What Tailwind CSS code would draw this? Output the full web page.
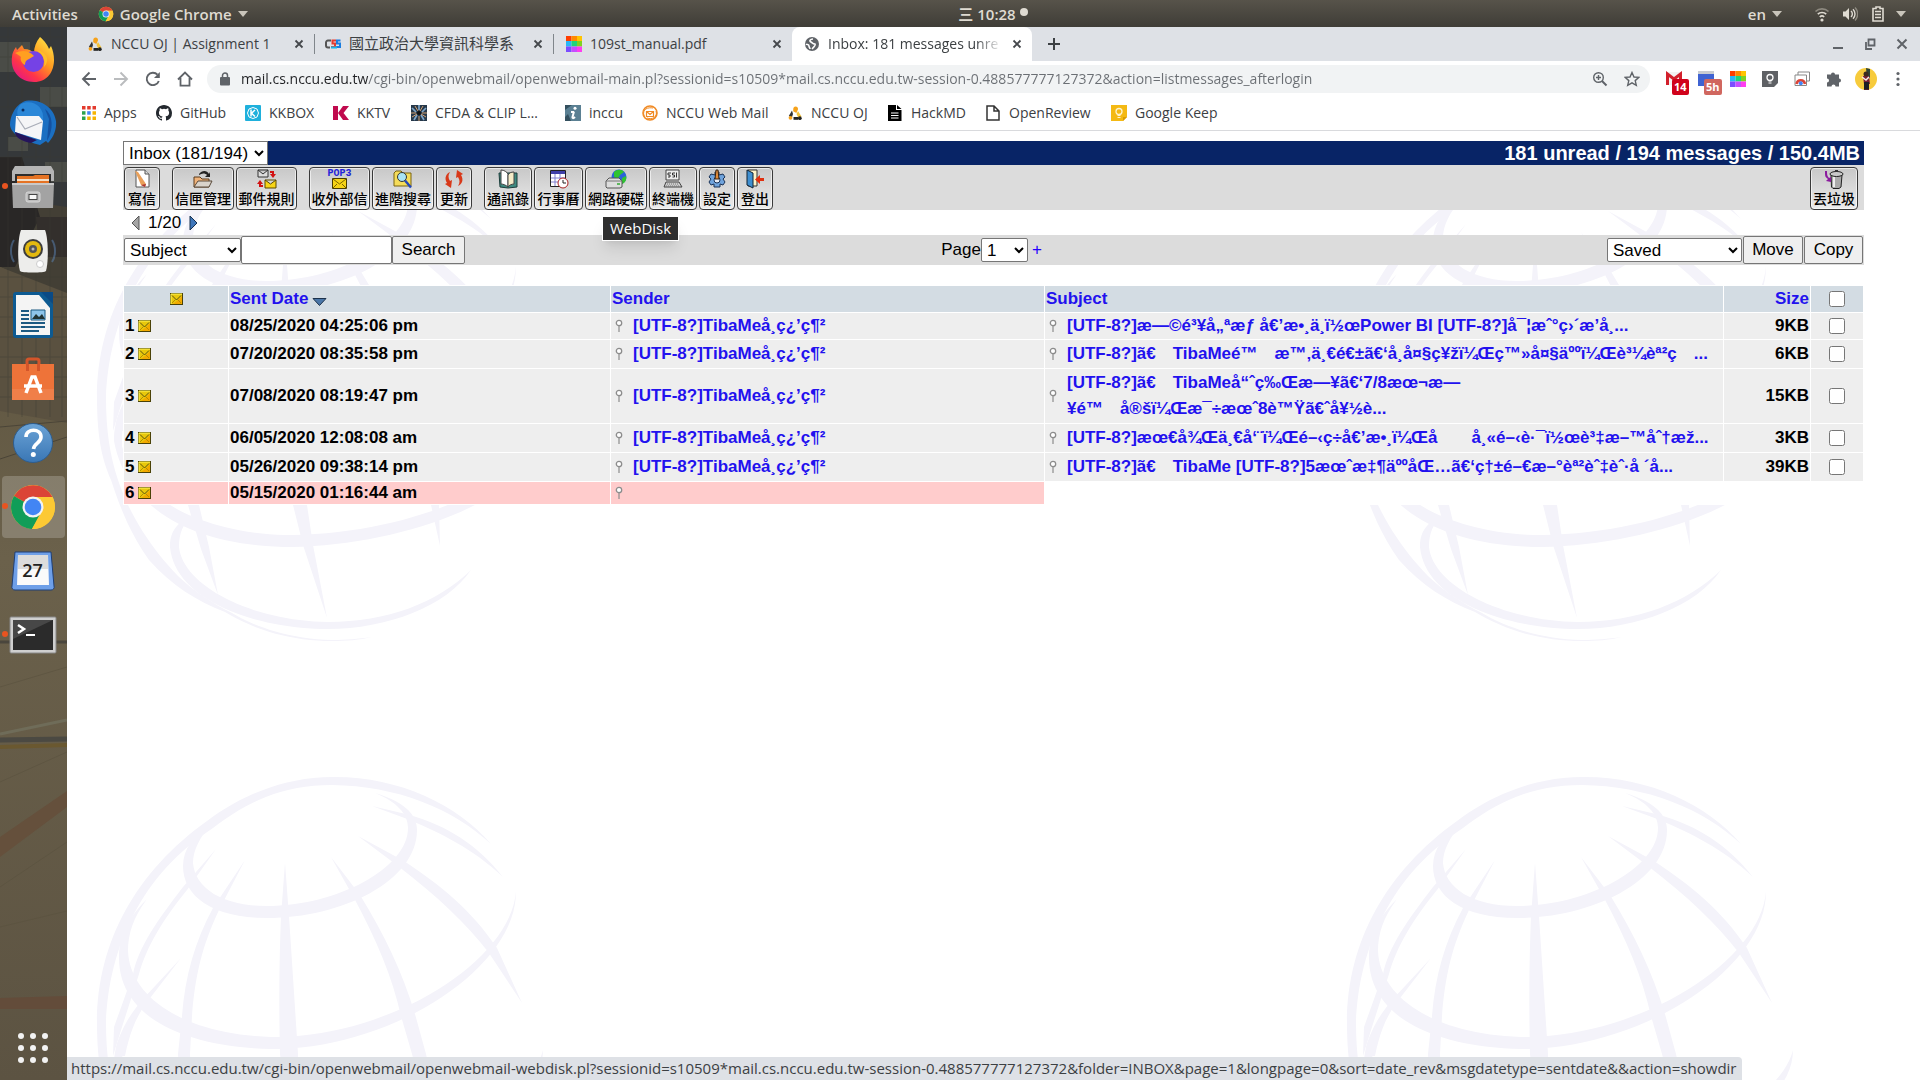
<!DOCTYPE html>
<html lang="en">
<head>
<meta charset="utf-8">
<title>Inbox: 181 messages unread</title>
<script src="https://cdn.jsdelivr.net/npm/@tailwindcss/browser@4"></script>
</head>
<body class="flex h-screen flex-col overflow-hidden bg-[#5f5745] font-['Open_Sans','Noto_Sans_CJK_TC',sans-serif] text-sm text-[#3c4043]">

<!-- shared symbols -->
<svg class="hidden" aria-hidden="true">
  <symbol id="mail" viewBox="0 0 13 12">
    <rect x=".5" y=".5" width="12" height="11" fill="#e8c80c" stroke="#4a4208"/>
    <path d="M1 11V1h11" fill="none" stroke="#fff45a"/>
    <path d="M7 8l5-5v8H3z" fill="#f2a900"/>
    <path d="M2 2.500l4.500 4.500L11 2.500" fill="none" stroke="#5c5210"/>
    <path d="M2 10l3-3M11 10L8 7" stroke="#b98a00" fill="none"/>
  </symbol>
  <symbol id="pin" viewBox="0 0 8 14">
    <circle cx="4" cy="4" r="2.700" fill="#fff" stroke="#8c8c8c" stroke-width="1.300"/>
    <path d="M4 7v6" stroke="#8c8c8c" stroke-width="1.200"/>
  </symbol>
  <symbol id="close" viewBox="0 0 10 10"><path d="M1.500 1.500l7 7M8.500 1.500l-7 7" stroke="#45484c" stroke-width="1.800" fill="none"/></symbol>
  <symbol id="judge" viewBox="0 0 16 16">
    <path d="M8.500 1.500a2.500 2.500 0 0 1 2.400 3.300L9.300 8 6.200 6.300 6.300 3.500A2.300 2.300 0 0 1 8.500 1.500z" fill="#f6a21b"/>
    <path d="M5 5.500L1.800 11l3 1.800L6 9z" fill="#333"/>
    <path d="M11 6l3.500 5.500-3 1.800L9.500 9z" fill="#f5c43c"/>
    <circle cx="3.500" cy="12.800" r="1.900" fill="#f6a21b"/><path d="M6.500 12h4.500v2.800H6.500z" fill="#222"/><circle cx="12.800" cy="13.200" r="1.900" fill="#222"/>
  </symbol>
  <symbol id="rainbow" viewBox="0 0 16 16">
    <path d="M0 0h5.500v5H0z" fill="#ff3d00"/><path d="M5.500 0H11v5H5.500z" fill="#ff8a00"/><path d="M11 0h5v5h-5z" fill="#ffc400"/>
    <path d="M0 5h5.500v5.500H0z" fill="#29b6f6"/><path d="M5.500 5H11v5.500H5.500z" fill="#1fd47a"/><path d="M11 5h5v5.500h-5z" fill="#7ed321"/>
    <path d="M0 10.500h5.500V16H0z" fill="#7c4dff"/><path d="M5.500 10.500H11V16H5.500z" fill="#c74dff"/><path d="M11 10.500h5V16h-5z" fill="#ff3df0"/>
  </symbol>
  <symbol id="chrome" viewBox="0 0 48 48">
    <circle cx="24" cy="24" r="22" fill="#fcc934"/>
    <path d="M24 24L5 13A22 22 0 0 1 43.500 14H24z" fill="#db4437"/>
    <path d="M5 13A22 22 0 0 0 23 46l9-17-8-5z" fill="#109d58"/>
    <path d="M43.500 14H24v10l9 5-10 17A22 22 0 0 0 43.500 14z" fill="#fcc934"/>
    <circle cx="24" cy="24" r="10.500" fill="#f3f3f3"/><circle cx="24" cy="24" r="8.300" fill="#4285f4"/>
  </symbol>
</svg>

<!-- desktop top bar -->
<header class="flex h-[27px] shrink-0 items-center bg-linear-to-b from-[#57534a] to-[#3f3d37] text-[15px] leading-5 font-semibold text-[#dfdbd2]">
  <div class="flex flex-1 items-center">
    <button class="ml-3">Activities</button>
    <button class="ml-5 flex items-center gap-1.5">
      <svg class="size-4"><use href="#chrome"/></svg>Google Chrome
      <svg class="h-1.5 w-2.5" viewBox="0 0 10 6"><path d="M0 0h10L5 6z" fill="#c9c5bb"/></svg>
    </button>
  </div>
  <div class="flex items-center gap-1 pl-20">
    <span>三 10:28</span><span class="mb-1 size-2 rounded-full bg-[#dfdbd2]"></span>
  </div>
  <div class="flex flex-1 items-center justify-end pr-3.5">
    <button class="flex items-center gap-1.5">en
      <svg class="h-1.5 w-2.5" viewBox="0 0 10 6"><path d="M0 0h10L5 6z" fill="#c9c5bb"/></svg>
    </button>
    <svg class="ml-8 size-4" viewBox="0 0 16 16" fill="none" stroke-width="1.700"><path d="M1.500 5.500a9.500 9.500 0 0 1 13 0" stroke="#8d897f"/><path d="M3.800 8.200a6 6 0 0 1 8.400 0M5.800 11a3.200 3.200 0 0 1 4.400 0" stroke="#dfdbd2"/><circle cx="8" cy="14" r="1.600" fill="#dfdbd2"/></svg>
    <svg class="ml-3 size-4" viewBox="0 0 16 16" fill="none" stroke="#dfdbd2" stroke-width="1.400"><path d="M1 5.500h2.500L7 2v12L3.500 10.500H1z" fill="#dfdbd2" stroke="none"/><path d="M9 5a4 4 0 0 1 0 6M11 3.300a6.500 6.500 0 0 1 0 9.400"/><path d="M13 1.600a9 9 0 0 1 0 12.800" stroke="#8d897f"/></svg>
    <svg class="ml-3.5 h-4 w-3" viewBox="0 0 12 16"><path d="M4 1h4v1.500h3V15H1V2.500h3z" fill="none" stroke="#dfdbd2" stroke-width="1.600"/><path d="M3 5.500h6M3 8.500h6M3 11.500h6" stroke="#dfdbd2" stroke-width="1.500"/></svg>
    <svg class="ml-3 h-1.5 w-2.5" viewBox="0 0 10 6"><path d="M0 0h10L5 6z" fill="#c9c5bb"/></svg>
  </div>
</header>

<div class="flex min-h-0 flex-1">
<!-- dock -->
<nav aria-label="Dock" class="relative flex w-[67px] shrink-0 flex-col overflow-hidden bg-[#655c47] pr-0.5">
  <svg class="absolute inset-0 size-full" viewBox="0 0 67 1053" preserveAspectRatio="none">
    <defs><linearGradient id="wood" x2="0" y2="1"><stop offset="0" stop-color="#5d543f"/><stop offset=".35" stop-color="#6b614b"/><stop offset="1" stop-color="#5c5342"/></linearGradient></defs>
    <path d="M0 250h67v803H0z" fill="url(#wood)"/>
    <path d="M0 0h67v190H0z" fill="#35383a"/><path d="M0 15h30v30H0zM40 60h27v20H40zM8 110h20v14H8zM45 135h22v20H45z" fill="#4a4c47"/>
    <path d="M0 170l67 10v90L0 240z" fill="#433f35"/><path d="M0 130h22l18 60-25 50H0z" fill="#292726"/><path d="M36 190h31v40H40z" fill="#332f2c"/>
    <path d="M0 240l67 26v130L0 384z" fill="#5a5140"/>
    <path d="M0 10h67M0 30h67M0 80h67M0 130h67M0 250h67M0 270h67M0 290h67M0 310h67M0 330h67M0 350h67M0 370h67M8 0v390M22 0v390M36 0v390M50 0v390M62 0v390" stroke="#3a3a33" opacity=".4"/>
    <path d="M0 400l67-6M0 432l67-22" stroke="#4b4538"/>
    <path d="M0 615h67" stroke="#4a463d" stroke-width="3"/><path d="M0 707l67-14" stroke="#6f6c59" stroke-width="3"/><path d="M0 713l67-1" stroke="#4b4942" stroke-width="5"/>
    <path d="M0 720l67-2" stroke="#6a5830" stroke-width="4"/>
    <path d="M0 810l67-46v16L0 830z" fill="#65503c"/><path d="M0 971l67-2v13H0z" fill="#634c3a"/>
    <path d="M0 660l67-20M0 755l67-30M0 860l67-45M0 900l67-16" stroke="#5a523f" opacity=".6"/>
  </svg>
  <button aria-label="Firefox" class="relative flex h-16 shrink-0 items-center justify-center">
    <svg class="size-12" viewBox="0 0 48 48"><defs><linearGradient id="ff" x1="1" y1="0" x2=".2" y2="1"><stop offset="0" stop-color="#fff44f"/><stop offset=".45" stop-color="#ff9a1f"/><stop offset=".75" stop-color="#ff3647"/><stop offset="1" stop-color="#e31587"/></linearGradient></defs>
      <path d="M31 2c5 4 8 9 9 12l2-3c7 15 2 36-17 36C10 47 1 35 3 22c0-4 2-7 4-10l1 3 5-5 2 4c5 0 8 2 10 4 0-6 2-11 6-16z" fill="url(#ff)"/>
      <circle cx="24.500" cy="26.500" r="10.500" fill="#7542e5"/><path d="M6 18c6-3 14-3 19 3l-5 3c-3 1-4 3-4 6-4-2-5-6-4-8-2-2-4-3-6-4z" fill="#ff9f21"/><path d="M27 15c6 3 10 9 8 17 6-6 4-15-8-17z" fill="#ffbd2a"/></svg>
  </button>
  <button aria-label="Thunderbird" class="relative flex h-16 shrink-0 items-center justify-center">
    <svg class="size-12" viewBox="0 0 48 48"><path d="M14 3C22-1 44 3 47 22c1 10-4 18-8 22l-2-2-6 4C16 42 2 36 1 26 1 18 5 8 14 3z" fill="#1b6fc2"/><path d="M12 5C22 0 36 6 34 22l-24-2C7 14 8 9 12 5z" fill="#2b87d8"/><path d="M36 10c8 6 9 20 2 32l2-22z" fill="#1451a0"/><path d="M7 17l23 0 4 5-2 19-26-8z" fill="#f5f5f7"/><path d="M8 18l8 12 17-7" fill="none" stroke="#a9adb8" stroke-width="1.200"/><circle cx="14" cy="11" r="1.500" fill="#0b2e63"/><path d="M6 33l22 8-6 3C12 42 6 38 6 33z" fill="#25145c"/></svg>
  </button>
  <button aria-label="Files" class="relative flex h-16 shrink-0 items-center justify-center">
    <span class="absolute top-7 left-0.5 size-1.5 rounded-full bg-[#e95420]"></span>
    <svg class="size-12" viewBox="0 0 48 48"><path d="M6 3h36l3 5v10H3V8z" fill="#b5b5b5"/><path d="M6 11h36v9H6z" fill="#2d2d2d"/><path d="M8 13h16l2-1h14v8H8z" fill="#e57324"/><path d="M8 16h32v2H8z" fill="#f4dfc6"/><path d="M3 20h42l-1 25H4z" fill="#a3a3a3"/><path d="M3 20h42v2H3z" fill="#c9c9c9"/><rect x="17" y="29" width="14" height="10" rx="2" fill="#bdbdbd" stroke="#d8d8d8"/><rect x="20" y="31.500" width="8" height="5" fill="#f7f7f7" stroke="#444"/></svg>
  </button>
  <button aria-label="Rhythmbox" class="relative flex h-16 shrink-0 items-center justify-center">
    <svg class="size-12" viewBox="0 0 48 48"><path d="M5 13c-4 6-4 16 0 22M43 13c4 6 4 16 0 22" stroke="#5c86b8" stroke-width="2" fill="none" opacity=".5"/><path d="M12 3h24c3 7 4 30 1 41-1 2-25 2-26 0-3-11-2-34 1-41z" fill="#ededeb"/><circle cx="24" cy="22" r="10" fill="#3d3d3d"/><circle cx="24" cy="22" r="8" fill="#e3b90f"/><circle cx="24" cy="22" r="4" fill="#555"/><circle cx="24" cy="22" r="1.500" fill="#bbb"/><circle cx="31" cy="37" r="3.500" fill="#fff" stroke="#ccc"/></svg>
  </button>
  <button aria-label="LibreOffice Writer" class="relative flex h-16 shrink-0 items-center justify-center">
    <svg class="size-12" viewBox="0 0 48 48"><path d="M7 1h26l11 12v31a3 3 0 0 1-3 3H7a3 3 0 0 1-3-3V4a3 3 0 0 1 3-3z" fill="#0d5a92"/><path d="M32 1h12v12z" fill="#0a4a86"/><path d="M7 4h23l11 13v27H7z" fill="#f4f4f4"/><path d="M12 20h8M12 24h8M12 28h8M12 32h24M12 36h24M12 40h18" stroke="#1d5a82" stroke-width="2"/><path d="M22 19h14v10H22z" fill="#8ec4ea" stroke="#1d5a82"/><path d="M23 28l4-5 3 3 3-3 3 5z" fill="#233"/></svg>
  </button>
  <button aria-label="Ubuntu Software" class="relative flex h-16 shrink-0 items-center justify-center">
    <svg class="size-12" viewBox="0 0 48 48"><path d="M18 12V6a2 2 0 0 1 2-2h8a2 2 0 0 1 2 2v6" fill="none" stroke="#d3552a" stroke-width="3"/><path d="M3 9h42v36H3z" fill="#ee7339"/><path d="M3 34h42v11H3z" fill="#f07f49"/><path d="M17 9h3v7h-3zM28 9h3v7h-3z" fill="#d3552a"/><path d="M17 38l6-16h3l6 16" fill="none" stroke="#fff" stroke-width="3.500"/><path d="M15 31h18" stroke="#fff" stroke-width="3.500"/></svg>
  </button>
  <button aria-label="Help" class="relative flex h-16 shrink-0 items-center justify-center">
    <span class="flex size-10 items-center justify-center rounded-full border border-[#2d5e92] bg-linear-to-b from-[#6ba3d6] to-[#3a77b5]">
      <svg class="size-8" viewBox="0 0 32 32"><path d="M9 10c0-9 15-9 15 0 0 6-7 6-7.500 12" fill="none" stroke="#fff" stroke-width="3.600"/><circle cx="16.300" cy="27.500" r="2.500" fill="#fff"/></svg>
    </span>
  </button>
  <button aria-label="Google Chrome" class="relative flex h-16 shrink-0 items-center justify-center">
    <span class="absolute inset-y-px right-0 left-0.5 rounded bg-white/20"></span>
    <span class="absolute top-7 left-0.5 size-1.5 rounded-full bg-[#e95420]"></span>
    <svg class="relative size-12"><use href="#chrome"/></svg>
  </button>
  <button aria-label="Calendar" class="relative flex h-16 shrink-0 items-center justify-center">
    <svg class="size-12" viewBox="0 0 48 48"><path d="M6 5h36l3 34a3 3 0 0 1-3 4H6a3 3 0 0 1-3-4z" fill="#6e9fe8" stroke="#1e3f77"/><path d="M9 8h30l1 30H8z" fill="#fafafa"/><path d="M9 8h30v14H9z" fill="#dcdcdc"/></svg>
    <span class="absolute pb-0.5 text-lg leading-5 font-semibold text-[#222]">27</span>
  </button>
  <button aria-label="Terminal" class="relative flex h-16 shrink-0 items-center justify-center">
    <span class="absolute top-7 left-0.5 size-1.5 rounded-full bg-[#e95420]"></span>
    <svg class="h-10 w-12" viewBox="0 0 48 40"><rect x="1" y="2" width="46" height="36" rx="1" fill="#cfcfcf" stroke="#888"/><rect x="4" y="5" width="40" height="30" fill="#2b2b2b"/><path d="M4 5h40L4 24z" fill="#474747"/><path d="M9 10l6 4-6 4" fill="none" stroke="#fff" stroke-width="2.500"/><path d="M17 20h9" stroke="#fff" stroke-width="2"/></svg>
  </button>
  <button aria-label="Show Applications" class="relative mt-auto mb-4 flex justify-center">
    <svg class="size-8" viewBox="0 0 32 32" fill="#f2f2f2"><circle cx="4" cy="4" r="3"/><circle cx="16" cy="4" r="3"/><circle cx="28" cy="4" r="3"/><circle cx="4" cy="16" r="3"/><circle cx="16" cy="16" r="3"/><circle cx="28" cy="16" r="3"/><circle cx="4" cy="28" r="3"/><circle cx="16" cy="28" r="3"/><circle cx="28" cy="28" r="3"/></svg>
  </button>
</nav>

<!-- browser window -->
<div class="flex min-w-0 flex-1 flex-col bg-white">
  <div class="flex h-[34px] shrink-0 items-center bg-[#dee1e6] pl-2">
    <div role="tablist" class="flex h-full items-center">
      <div role="tab" class="flex h-full w-[240px] items-center">
        <svg class="ml-3 size-4"><use href="#judge"/></svg><span class="ml-2 flex-1 truncate">NCCU OJ | Assignment 1</span>
        <button aria-label="Close tab"><svg class="size-2.5"><use href="#close"/></svg></button><span class="ml-2.5 h-5 w-px bg-[#80868b]"></span>
      </div>
      <div role="tab" class="flex h-full w-[239px] items-center">
        <svg class="ml-2.5 h-3 w-4" viewBox="0 0 16 12" fill="none" stroke-width="2"><path d="M6 2.500H3a2 2 0 0 0-2 2v3a2 2 0 0 0 2 2h2" stroke="#555"/><path d="M11 2.500H7.500v3H10v3.500H6" stroke="#e33b2e"/><path d="M15.500 2.500H12v3h3v3.500h-4" stroke="#1a7de0"/><path d="M6 9.500h6" stroke="#18b5e8"/></svg><span class="ml-2 flex-1 truncate text-[15px]">國立政治大學資訊科學系</span>
        <button aria-label="Close tab"><svg class="size-2.5"><use href="#close"/></svg></button><span class="ml-2.5 h-5 w-px bg-[#80868b]"></span>
      </div>
      <div role="tab" class="flex h-full w-[238px] items-center pr-2.5">
        <svg class="ml-3 size-4"><use href="#rainbow"/></svg><span class="ml-2 flex-1 truncate">109st_manual.pdf</span>
        <button aria-label="Close tab"><svg class="size-2.5"><use href="#close"/></svg></button>
      </div>
      <div role="tab" aria-selected="true" class="flex h-full w-[240px] items-center rounded-t-lg bg-white pr-2.5">
        <svg class="ml-3 size-4" viewBox="0 0 16 16"><circle cx="8" cy="8" r="7" fill="#5f6368"/><path d="M9 3c-3 0-4 2-2 3s1 2 4 2c1 1-1 3-3 5M2 8c1 1 3 0 3 2s1 1 1 3" fill="none" stroke="#fff" stroke-width="1.600"/></svg>
        <span class="ml-2 w-[174px] overflow-hidden mask-r-from-85% whitespace-nowrap text-[#3c4043]">Inbox: 181 messages unre</span>
        <button aria-label="Close tab" class="ml-auto"><svg class="size-2.5"><use href="#close"/></svg></button>
      </div>
    </div>
    <button aria-label="New tab" class="ml-4"><svg class="size-3" viewBox="0 0 12 12"><path d="M6 0v12M0 6h12" stroke="#3c4043" stroke-width="2"/></svg></button>
    <div class="ml-auto flex items-center gap-5 pr-3">
      <button aria-label="Minimize"><svg class="size-3" viewBox="0 0 12 12"><path d="M1 10h10" stroke="#5f6368" stroke-width="2"/></svg></button>
      <button aria-label="Restore"><svg class="size-3" viewBox="0 0 12 12" fill="none" stroke="#5f6368" stroke-width="1.800"><path d="M4.500 1.500h6v6h-6z"/><path d="M2 4v7h6"/></svg></button>
      <button aria-label="Close window"><svg class="size-3" viewBox="0 0 12 12"><path d="M1.500 1.500l9 9M10.500 1.500l-9 9" stroke="#5f6368" stroke-width="2"/></svg></button>
    </div>
  </div>

  <div class="flex h-9 shrink-0 items-center pr-1.5 pl-3.5">
    <button aria-label="Back"><svg class="size-4" viewBox="0 0 16 16" fill="none" stroke="#5f6368" stroke-width="1.900"><path d="M15 8H2M8.500 1.500L2 8l6.500 6.500"/></svg></button>
    <button aria-label="Forward" class="ml-4"><svg class="size-4" viewBox="0 0 16 16" fill="none" stroke="#babcbe" stroke-width="1.900"><path d="M1 8h13M7.500 1.500L14 8l-6.500 6.500"/></svg></button>
    <button aria-label="Reload" class="ml-4"><svg class="size-4" viewBox="0 0 16 16" fill="none" stroke="#5f6368" stroke-width="1.900"><path d="M13.800 10a6.200 6.200 0 1 1-1.300-6.300"/><path d="M14.800 1v6H9z" fill="#5f6368" stroke="none"/></svg></button>
    <button aria-label="Home" class="ml-4"><svg class="size-4" viewBox="0 0 16 16" fill="none" stroke="#5f6368" stroke-width="1.800"><path d="M1 8.500L8 1.500l7 7M3.500 7v7.600h9V7"/></svg></button>
    <div class="ml-3.5 flex h-7 flex-1 items-center rounded-full bg-[#f1f3f4] pr-2.5 pl-3">
      <svg class="h-3.5 w-3" viewBox="0 0 12 14"><rect x="1" y="5" width="10" height="8.500" rx="1" fill="#5f6368"/><path d="M3.500 6V3.500a2.500 2.500 0 0 1 5 0V6" fill="none" stroke="#5f6368" stroke-width="1.500"/></svg>
      <input aria-label="Address" class="ml-2.5 flex-1 bg-linear-to-r from-[#202124] from-[127px] to-[#6b6f74] to-[127px] bg-clip-text text-transparent outline-none" value="mail.cs.nccu.edu.tw/cgi-bin/openwebmail/openwebmail-main.pl?sessionid=s10509*mail.cs.nccu.edu.tw-session-0.488577777127372&amp;action=listmessages_afterlogin">
      <button aria-label="Zoom"><svg class="size-4" viewBox="0 0 16 16" fill="none" stroke="#5f6368" stroke-width="1.400"><circle cx="6.500" cy="6.500" r="4.800"/><path d="M10 10l4.500 4.500" stroke-width="2"/><path d="M4 6.500h5M6.500 4v5"/></svg></button>
      <button aria-label="Bookmark this page" class="ml-4"><svg class="size-4" viewBox="0 0 16 16"><path d="M8 1.500l2 4.500 4.900.400-3.700 3.200 1.100 4.800L8 11.900l-4.300 2.500 1.100-4.800L1.100 6.400 6 6z" fill="none" stroke="#5f6368" stroke-width="1.400"/></svg></button>
    </div>
    <div class="ml-2 flex items-center *:flex *:w-8 *:justify-center">
      <button aria-label="Mail checker, 14 unread" class="relative"><svg class="size-4" viewBox="0 0 16 16"><path d="M0 1h16v13H0z" fill="#f2f2f2"/><path d="M1.500 14V3L8 8l6.500-5v11" fill="none" stroke="#d2202c" stroke-width="3"/></svg><span class="absolute top-2 left-3.5 rounded-xs bg-[#d0021b] px-0.5 text-[11px] leading-4 font-bold text-white">14</span></button>
      <button aria-label="Event in 5h" class="relative"><svg class="size-4" viewBox="0 0 16 16"><path d="M0 0h16v3H0z" fill="#c9ccd1"/><path d="M0 3h16v12H0z" fill="#3f63d2"/></svg><span class="absolute top-2 left-3.5 rounded-xs bg-[#d0675f] px-0.5 text-[11px] leading-4 font-bold text-white">5h</span></button>
      <button aria-label="Tab colors"><svg class="size-4"><use href="#rainbow"/></svg></button>
      <button aria-label="Keep extension"><svg class="size-4" viewBox="0 0 16 16"><path d="M0 0h16v12l-4 4H0z" fill="#5f6165"/><circle cx="8" cy="6.500" r="3" fill="none" stroke="#fff" stroke-width="1.300"/><path d="M6.500 10h3M6.500 12h3" stroke="#fff"/></svg></button>
      <button aria-label="Remote desktop"><svg class="size-4" viewBox="0 0 16 16" fill="#fff" stroke="#888"><path d="M4 1h11.500v9H4z"/><path d="M1 4h11.500v10.500H1z"/><path d="M2.500 13a4.300 4.300 0 0 1 8.500 0" stroke="#db4437" stroke-width="2.500" fill="none"/><circle cx="6.800" cy="12.300" r="2" fill="#4285f4" stroke="none"/></svg></button>
      <button aria-label="Extensions"><svg class="size-4" viewBox="0 0 16 16"><path d="M1 3.500h4a2 2 0 1 1 4 0h4v4a2 2 0 1 1 0 4v4H9.500a2 2 0 0 0-4 0H1V11.500a2 2 0 0 0 0-4z" fill="#5f6368"/></svg></button>
      <button aria-label="Profile"><svg class="size-[22px]" viewBox="0 0 22 22"><circle cx="11" cy="11" r="11" fill="#f7cb3c"/><path d="M11 0l4 1v9h-3z" fill="#2e4436"/><path d="M8 8h6l1 8h-1v6H9v-6z" fill="#7a1f35"/><path d="M9 14h5v7.500H9z" fill="#1d1d24"/><circle cx="11" cy="6" r="2.500" fill="#3b2a20"/><path d="M7 9l4 3 3-3" stroke="#f4efe8" stroke-width="1.500" fill="none"/></svg></button>
      <button aria-label="Menu"><svg class="h-4 w-1" viewBox="0 0 4 16" fill="#5f6368"><circle cx="2" cy="2.500" r="1.600"/><circle cx="2" cy="8" r="1.600"/><circle cx="2" cy="13.500" r="1.600"/></svg></button>
    </div>
  </div>

  <nav aria-label="Bookmarks" class="flex h-[34px] shrink-0 items-center border-b border-[#d9dadd] pb-0.5 pl-[15px] whitespace-nowrap *:flex *:items-center *:gap-2">
    <a href="#" class="w-[74px]"><svg class="size-3.5" viewBox="0 0 14 14"><path d="M0 0h3.500v3.500H0zM5.200 0h3.500v3.500H5.200zM10.500 0H14v3.500h-3.500z" fill="#e33b2e"/><path d="M0 5.200h3.500v3.500H0z" fill="#2ba24c"/><path d="M5.200 5.200h3.500v3.500H5.200z" fill="#4285f4"/><path d="M10.500 5.200H14v3.500h-3.500zM10.500 10.500H14V14h-3.500zM5.200 10.500h3.500V14H5.200z" fill="#f5b400"/><path d="M0 10.500h3.500V14H0z" fill="#2ba24c"/></svg>Apps</a>
    <a href="#" class="w-[89px]"><svg class="size-4" viewBox="0 0 16 16"><path fill="#24292f" d="M8 0C3.580 0 0 3.580 0 8c0 3.540 2.290 6.530 5.470 7.590.400.070.550-.170.550-.380 0-.190-.010-.820-.010-1.490-2.010.370-2.530-.490-2.690-.940-.090-.230-.480-.940-.820-1.130-.280-.150-.680-.520-.010-.530.630-.010 1.080.580 1.230.820.720 1.210 1.870.870 2.330.660.070-.520.280-.870.510-1.070-1.780-.200-3.640-.890-3.640-3.950 0-.870.310-1.590.820-2.150-.080-.200-.360-1.020.080-2.120 0 0 .670-.210 2.200.820a7.600 7.600 0 0 1 4 0c1.530-1.040 2.200-.820 2.200-.820.440 1.100.160 1.920.080 2.120.510.560.820 1.270.820 2.150 0 3.070-1.870 3.750-3.650 3.950.290.250.540.730.540 1.480 0 1.070-.010 1.930-.010 2.200 0 .210.150.460.550.380A8 8 0 0 0 16 8c0-4.420-3.580-8-8-8z"/></svg>GitHub</a>
    <a href="#" class="w-[88px]"><svg class="size-4" viewBox="0 0 16 16"><rect width="16" height="16" rx="1" fill="#1fb0dc"/><path d="M8 2.500l4 1.500 1.500 4-1.500 4L8 13.500 4 12 2.500 8 4 4z" fill="none" stroke="#fff"/><path d="M6 4.500v7M10 5L6.500 8.200 10 11.500" stroke="#fff" stroke-width="1.500" fill="none"/></svg>KKBOX</a>
    <a href="#" class="w-[78px]"><svg class="size-4" viewBox="0 0 16 16"><path d="M0 1h5v14H0zM10 1h6L10.500 8l5.500 7h-6L5 8z" fill="#c00a4e"/></svg>KKTV</a>
    <a href="#" class="w-[154px]"><svg class="size-4" viewBox="0 0 16 16"><path d="M0 0h16v16H0z" fill="#26384a"/><path d="M1 3l4 4M15 3l-4 4M3 15l3-5M13 15l-3-5M8 0v5" stroke="#7fa6c9" stroke-width="1.700"/><path d="M0 8h5M16 8h-5M4 1l3 5M12 1L9 6M1 12l5-3M15 12l-5-3M8 16v-5" stroke="#d3a173"/><circle cx="8" cy="8" r="2" fill="#111"/></svg>CFDA &amp; CLIP L…</a>
    <a href="#" class="w-[77px]"><svg class="size-4" viewBox="0 0 16 16"><path d="M0 0h16v16H0z" fill="#5b8093"/><path d="M0 5l7-5H0zM0 16h6L3 9 0 12z" fill="#34505f"/><path d="M9 6.500L7.500 12c-.300 1.500 1 1.500 2.500 0M6 7h3" stroke="#fff" stroke-width="2" fill="none"/><circle cx="10" cy="3.200" r="1.500" fill="#fff"/></svg>inccu</a>
    <a href="#" class="w-[145px]"><svg class="size-4" viewBox="0 0 16 16" fill="none" stroke="#f08a24"><circle cx="8" cy="8" r="7" stroke-width="1.600"/><path d="M2 11C0 4 6 2 11 3M14 6c2 6-4 9-9 7" /><path d="M4.500 6.500h7v5h-7zM4.500 6.500L8 9.500l3.500-3" stroke-width="1.200"/></svg>NCCU Web Mail</a>
    <a href="#" class="w-[100px]"><svg class="size-4"><use href="#judge"/></svg>NCCU OJ</a>
    <a href="#" class="w-[98px]"><svg class="size-4" viewBox="0 0 16 16"><path d="M1 0h8v5h5.500v11H1zM10 0l4.500 4H10z" fill="#000"/><path d="M4 8h7.500M4 10.500h7.500M4 13h7.500" stroke="#fff" stroke-width="1.200"/></svg>HackMD</a>
    <a href="#" class="w-[126px]"><svg class="size-4" viewBox="0 0 16 16"><path d="M2 1h7l5 5v9H2zM9 1v5h5" fill="#fff" stroke="#333" stroke-width="1.500"/></svg>OpenReview</a>
    <a href="#"><svg class="size-4" viewBox="0 0 16 16"><path d="M0 0h16v12l-4 4H0z" fill="#f4b913"/><path d="M16 12h-4v4z" fill="#d99c00"/><circle cx="8" cy="6.500" r="3" fill="none" stroke="#fff3cd" stroke-width="1.300"/><path d="M6.500 10.500h3M6.500 12.500h3" stroke="#fff3cd"/></svg>Google Keep</a>
  </nav>

  <!-- web page -->
  <main class="relative min-h-0 flex-1 overflow-hidden font-['Liberation_Sans','Noto_Sans_CJK_TC',sans-serif] text-[17px] leading-5 text-black">
    <svg class="absolute inset-0 size-full" aria-hidden="true">
      <pattern id="globes" width="1250" height="625" patternUnits="userSpaceOnUse">
        <g fill="#f4f3fa">
          <path d="M424 88C390 48 330 20 265 21 215 21 170 42 140 65 70 115 30 185 30 267 30 310 36 330 44 349 54 380 65 405 82 429 105 455 130 470 158 481 190 500 225 510 265 510 280 510 292 509 305 506 290 508 280 509 265 509 225 508 190 497 165 482 145 472 128 461 111 445 85 418 63 385 51 349 43 325 39 300 39 267 42 190 75 118 146 72 180 46 215 29 265 29 330 30 385 52 424 88z"/>
          <path d="M308 37C335 45 350 57 350 74 350 125 275 162 200 162 145 162 116 140 116 110 116 94 126 78 146 66 132 82 126 95 126 107 128 132 155 150 200 150 270 150 341 112 341 72 341 58 330 46 308 37z"/>
          <path d="M80 143C58 165 52 182 52 202 52 262 120 293 212 293 330 290 450 210 449 135 444 205 325 279 212 281 125 281 63 245 61 195 61 178 66 162 80 143z"/>
          <path d="M75 252C56 270 47 285 47 310 60 380 130 416 225 416 340 414 476 365 476 294 462 350 350 402 225 404 145 404 70 372 55 315 54 290 60 272 75 252z"/>
          <path d="M127 383C108 392 103 402 103 416 108 470 190 498 261 498 320 498 380 475 404 439 370 472 320 491 261 491 185 490 116 455 112 416 112 402 116 392 127 383z"/>
          <path d="M218 107L214 160C212 210 212 250 213 298 217 330 222 355 226 374L236 414 260 487 246 414 240 374C235 340 231 320 231 298L222 160z"/>
          <path d="M264 101L287 142C310 185 325 220 334 260L345 298C352 325 360 350 364 374L373 415 372 374C370 350 365 325 359 298L348 258C335 215 318 180 293 139z"/>
          <path d="M291 80L331 110C370 140 400 168 422 197L455 247 430 192C405 155 375 130 337 105z"/>
          <path d="M305 50L343 64C375 78 405 92 436 121 410 88 380 70 343 59z"/>
          <path d="M178 104L146 152C128 185 118 220 115 260L111 298C112 325 115 350 121 374L134 418 151 464 142 416 132 374C126 345 124 320 123 298L125 260C128 220 135 190 152 154z"/>
          <path d="M149 93L116 131C90 165 72 190 66 218L47 271 46 300 55 271 72 218C80 190 95 165 120 134z"/>
          <path d="M114 202L76 243C60 262 50 280 48 300L58 300C62 280 68 262 80 246z"/>
        </g>
      </pattern>
      <rect width="100%" height="100%" fill="url(#globes)"/>
    </svg>

    <div class="relative mr-14 ml-14 pt-2.5">
      <div class="flex h-6 items-center justify-between bg-[#082466] pr-1">
        <select aria-label="Folder" class="h-6 w-[145px] border border-[#767676] bg-white pl-px"><option>Inbox (181/194)</option></select>
        <h1 class="text-xl leading-6 font-bold text-white">181 unread / 194 messages / 150.4MB</h1>
      </div>

      <div class="flex h-[45px] items-start bg-[#dcdcdc] pt-0.5 pr-1.5 pl-px">
        <div class="flex gap-0.5 text-[14px] leading-4 font-medium text-black *:flex *:h-[43px] *:flex-col *:items-center *:justify-end *:gap-0.5 *:rounded *:border *:border-[#3a3a3a] *:bg-linear-to-b *:from-[#c8c8c8] *:to-[#ececec] *:pb-0.5 *:whitespace-nowrap *:ring-1 *:ring-white/60 *:ring-inset">
          <button class="mr-2.5 w-9"><svg class="h-5 w-5" viewBox="0 0 20 20"><path d="M4 1h9l4 4v13H4z" fill="#fff" stroke="#555"/><path d="M13 1v4h4" fill="#ddd" stroke="#555"/><path d="M3 2l3 1 8 12-1 3-4-2z" fill="#e9a05a"/><path d="M9 16l4 2 1-3z" fill="#a33"/></svg>寫信</button>
          <button class="w-[62px]"><svg class="h-5 w-5" viewBox="0 0 20 20"><path d="M6 5c3-4 8-4 10 0l1-2v5h-5l2-2c-2-2-5-2-8 0z" fill="#222"/><path d="M1 18V8h6l2 2h7v8z" fill="#f0b37a" stroke="#5a3a1a"/><path d="M1 18l4-6h14l-3 6z" fill="#d9d3cb" stroke="#5a4a3a"/></svg>信匣管理</button>
          <button class="mr-2.5 w-[61px]"><svg class="h-5 w-5" viewBox="0 0 20 20"><path d="M1 1h10v7H1zM1 1l5 4 5-4" fill="#ddd" stroke="#333"/><path d="M8 11h11v8H8zM8 11l5.500 4 5.500-4" fill="#f7d416" stroke="#5c4a00"/><path d="M13 2h4v3h2l-3 4-3-4h2V4h-2zM6 18H2v-3H0l3-4 3 4H4v1h2z" fill="#d21212"/></svg>郵件規則</button>
          <button class="w-[61px]"><span class="flex flex-col items-center font-['Liberation_Mono',monospace] text-[10px] leading-[9px] font-bold text-[#2222d8]">POP3<svg class="h-[11px] w-[15px]" viewBox="0 0 15 11"><path d="M.500.500h14v10H.500z" fill="#f7d416" stroke="#4a3d00"/><path d="M1 1l6.500 5L14 1M1 10l4-4M14 10l-4-4" fill="none" stroke="#7a6400"/></svg></span>收外部信</button>
          <button class="w-[62px]"><svg class="h-5 w-5" viewBox="0 0 20 20"><path d="M1 4l2-2h5l2 2h8v13H1z" fill="#f5dc5a" stroke="#7a6410"/><circle cx="9" cy="8" r="4.500" fill="#a9e4f5" stroke="#333"/><path d="M12 11.500l6 7" stroke="#2448b8" stroke-width="2.500"/></svg>進階搜尋</button>
          <button class="mr-2.5 w-9"><svg class="h-5 w-5" viewBox="0 0 20 20" fill="#d8391a"><path d="M6 3c-2 3-2 6 0 9l2-1-1 8-6-4 2-1C0 9 2 5 6 3z"/><path d="M14 17c2-3 2-6 0-9l-2 1 1-8 6 4-2 1c3 5 1 9-3 11z"/></svg>更新</button>
          <button class="w-12"><svg class="h-5 w-5" viewBox="0 0 20 20"><path d="M1 4l1 14 8 1 9-1V4z" fill="#3e8a80" stroke="#1c3d3a"/><path d="M3 1c3 0 6 2 7 4v13c-2-2-5-3-7-3z" fill="#fff" stroke="#444"/><path d="M16 3c-3 0-5 1-6 3v12c1-2 4-3 6-3z" fill="#f5ecc8" stroke="#444"/></svg>通訊錄</button>
          <button class="w-[49px]"><svg class="h-5 w-5" viewBox="0 0 20 20"><path d="M1.500 1.500h15v16h-15z" fill="#fff" stroke="#222"/><path d="M2 2h14v3H2z" fill="#3f3fa8"/><path d="M2 9h14M2 13h14M6 5v12M11 5v12" stroke="#8080d0"/><circle cx="14" cy="14" r="5" fill="#fff" stroke="#a22"/><path d="M14 11v3h3" stroke="#222" fill="none"/></svg>行事曆</button>
          <button class="w-[62px]"><svg class="h-5 w-6" viewBox="0 0 24 20"><circle cx="15" cy="8" r="7.500" fill="#2a62d8"/><path d="M10 3c3-3 8-3 10 0l-4 3-2 4-4-2zM18 9l4-2c1 4-1 7-4 8z" fill="#2fc42f"/><path d="M2 12l3-3h10l3 3v6l-2 1H3l-1-1z" fill="#ddd" stroke="#555"/><path d="M2 12h16" stroke="#777"/><path d="M13 15h3" stroke="#3a3" stroke-width="1.500"/></svg>網路硬碟</button>
          <button class="w-12"><svg class="h-5 w-5" viewBox="0 0 20 20"><path d="M3 1h13v10H3z" fill="#eee" stroke="#444"/><path d="M8 4H5v2h2v2H5M12 4H9.500v2h2v2h-2M13.500 3.500v5" stroke="#333" fill="none"/><path d="M3 13h13l3 5H1z" fill="#ccc" stroke="#444"/><path d="M4 15h12M3 17h13" stroke="#777" stroke-dasharray="1 1"/></svg>終端機</button>
          <button class="w-9"><svg class="h-5 w-5" viewBox="0 0 20 20"><path d="M8 3h4v3l4-1 2 3-2 2 2 3-2 3-3-1v3H7v-3l-3 1-2-3 2-3-2-2 2-3 4 1z" fill="#6fa3dc" stroke="#1b3357"/><circle cx="10" cy="11" r="3" fill="#e8eef8" stroke="#1b3357"/><path d="M9 1h2l1 9H8z" fill="#e08a3a" stroke="#3a2410"/></svg>設定</button>
          <button class="w-9"><svg class="h-5 w-5" viewBox="0 0 20 20"><path d="M3 1h9v16H3z" fill="#fdf3c8" stroke="#333"/><path d="M2 1l6 3v15l-6-3z" fill="#3f8fd0" stroke="#123"/><path d="M19 9h-4V6l-5 4.500 5 4.500v-3h4z" fill="#e03010"/></svg>登出</button>
        </div>
        <div class="ml-auto text-[14px] leading-4 font-medium">
          <button class="flex h-[43px] w-12 flex-col items-center justify-end gap-0.5 rounded border border-[#3a3a3a] bg-linear-to-b from-[#c8c8c8] to-[#ececec] pb-0.5 whitespace-nowrap ring-1 ring-white/60 ring-inset"><svg class="h-5 w-5" viewBox="0 0 20 20"><path d="M7 6h11l-1 12-2 1.500H9L7.500 18z" fill="#aaa" stroke="#222"/><path d="M9 7h2v11H9z" fill="#eee"/><ellipse cx="12.500" cy="5" rx="6.500" ry="2.500" fill="#c9c9c9" stroke="#222"/><path d="M11 1h3v2h-3z" fill="#333"/><path d="M1 2c0 5 0 6 3 8l-2 2 5 1V8L5 9C3 7 3 5 3 2z" fill="#8b1a9e"/></svg>丟垃圾</button>
        </div>
      </div>

      <div class="flex h-[25px] items-center gap-2 pl-2">
        <button aria-label="Previous page"><svg class="h-4 w-[9px]" viewBox="0 0 9 16"><path d="M8 1v14L1 8z" fill="#a5a5a5" stroke="#555"/></svg></button>
        <span>1/20</span>
        <button aria-label="Next page"><svg class="h-4 w-[9px]" viewBox="0 0 9 16"><path d="M1 1v14l7-7z" fill="#3f76ba" stroke="#16304f"/></svg></button>
      </div>

      <div class="grid h-[30px] grid-cols-[1fr_auto_1fr] items-center bg-[#dcdcdc]">
        <form class="flex items-center pl-px">
          <select aria-label="Search field" class="h-6 w-[117px] rounded-xs border border-[#767676] bg-white pl-px"><option>Subject</option></select>
          <input aria-label="Search text" class="h-7 w-[151px] rounded-xs border border-[#767676] bg-white px-1">
          <button type="button" class="h-7 w-[73px] rounded-xs border border-[#767676] bg-[#efefef]">Search</button>
        </form>
        <form class="flex items-center pr-1">
          <label for="page">Page</label>
          <select id="page" class="h-6 w-[47px] rounded-xs border border-[#767676] bg-white pl-px"><option>1</option></select>
          <a href="#" class="ml-1 text-[#2200ff]">+</a>
        </form>
        <form class="flex items-center justify-end pr-px">
          <select aria-label="Destination folder" class="h-6 w-[135px] rounded-xs border border-[#767676] bg-white pl-px"><option>Saved</option></select>
          <button type="button" class="ml-px h-7 w-[60px] rounded-xs border border-[#767676] bg-[#efefef]">Move</button>
          <button type="button" class="ml-px h-7 w-[59px] rounded-xs border border-[#767676] bg-[#efefef]">Copy</button>
        </form>
      </div>

      <table class="mt-5 w-full table-fixed border-separate border-spacing-px bg-white font-bold [&_a]:text-[#2211ee] [&_input]:mx-auto [&_input]:block [&_input]:size-4 [&_td]:px-px [&_td]:py-0 [&_th]:px-px [&_th]:py-0">
        <colgroup><col class="w-[104px]"><col class="w-[381px]"><col class="w-[433px]"><col><col class="w-[86px]"><col class="w-[52px]"></colgroup>
        <thead>
          <tr class="h-[26px] bg-[#d3dce3] text-left">
            <th><svg class="mx-auto h-3 w-[13px]" aria-label="Status"><use href="#mail"/></svg></th>
            <th><a href="#">Sent Date</a><svg class="ml-1 inline h-2 w-[15px] align-[-2px]" viewBox="0 0 15 8"><path d="M1 .500h13L7.500 7.500z" fill="#4a76a8" stroke="#1c324c"/></svg></th>
            <th><a href="#">Sender</a></th>
            <th><a href="#">Subject</a></th>
            <th class="text-right"><a href="#">Size</a></th>
            <th><input type="checkbox" aria-label="Select all"></th>
          </tr>
        </thead>
        <tbody class="[&_.pin]:mr-2.5 [&_.pin]:ml-[3px] [&_.pin]:h-3.5 [&_.pin]:w-2 [&_.pin]:shrink-0 [&_.row]:flex [&_.row]:items-center">
          <tr class="h-[26px] bg-[#eeeeee]"><td><div class="row gap-1">1 <svg class="h-3 w-[13px]"><use href="#mail"/></svg></div></td><td>08/25/2020 04:25:06 pm</td><td><div class="row"><svg class="pin"><use href="#pin"/></svg><a href="#">[UTF-8?]TibaMeå­¸ç¿’ç¶²</a></div></td><td><div class="row"><svg class="pin"><use href="#pin"/></svg><a href="#">[UTF-8?]æ—©é³¥å„ªæƒ å€’æ•¸ä¸­ï½œPower BI [UTF-8?]å¯¦æˆ°ç›´æ’­å¸...</a></div></td><td class="text-right">9KB</td><td><input type="checkbox" aria-label="Select message 1"></td></tr>
          <tr class="h-[28px] bg-[#eeeeee]"><td><div class="row gap-1">2 <svg class="h-3 w-[13px]"><use href="#mail"/></svg></div></td><td>07/20/2020 08:35:58 pm</td><td><div class="row"><svg class="pin"><use href="#pin"/></svg><a href="#">[UTF-8?]TibaMeå­¸ç¿’ç¶²</a></div></td><td><div class="row"><svg class="pin"><use href="#pin"/></svg><a href="#">[UTF-8?]ã€　TibaMeé™　æ™‚ä¸€é€±ã€‘å­¸å¤§ç¥žï¼Œç™»å¤§äººï¼Œè³¼èª²ç　...</a></div></td><td class="text-right">6KB</td><td><input type="checkbox" aria-label="Select message 2"></td></tr>
          <tr class="h-[54px] bg-[#eeeeee]"><td><div class="row gap-1">3 <svg class="h-3 w-[13px]"><use href="#mail"/></svg></div></td><td>07/08/2020 08:19:47 pm</td><td><div class="row"><svg class="pin"><use href="#pin"/></svg><a href="#">[UTF-8?]TibaMeå­¸ç¿’ç¶²</a></div></td><td><div class="row"><svg class="pin"><use href="#pin"/></svg><a href="#" class="leading-[26px]">[UTF-8?]ã€　TibaMeå“ˆç‰Œæ—¥ã€‘7/8æœ¬æ—<br>¥é™　å®šï¼Œæ¯÷æœˆ8è™Ÿã€ˆå¥½è...</a></div></td><td class="text-right">15KB</td><td><input type="checkbox" aria-label="Select message 3"></td></tr>
          <tr class="h-[28px] bg-[#eeeeee]"><td><div class="row gap-1">4 <svg class="h-3 w-[13px]"><use href="#mail"/></svg></div></td><td>06/05/2020 12:08:08 am</td><td><div class="row"><svg class="pin"><use href="#pin"/></svg><a href="#">[UTF-8?]TibaMeå­¸ç¿’ç¶²</a></div></td><td><div class="row"><svg class="pin"><use href="#pin"/></svg><a href="#">[UTF-8?]æœ€å¾Œä¸€å‘¨ï¼Œé–‹ç÷å€’æ•¸ï¼Œå　　å¸«é–‹è·¯ï½œè³‡æ–™åˆ†æž...</a></div></td><td class="text-right">3KB</td><td><input type="checkbox" aria-label="Select message 4"></td></tr>
          <tr class="h-[28px] bg-[#eeeeee]"><td><div class="row gap-1">5 <svg class="h-3 w-[13px]"><use href="#mail"/></svg></div></td><td>05/26/2020 09:38:14 pm</td><td><div class="row"><svg class="pin"><use href="#pin"/></svg><a href="#">[UTF-8?]TibaMeå­¸ç¿’ç¶²</a></div></td><td><div class="row"><svg class="pin"><use href="#pin"/></svg><a href="#">[UTF-8?]ã€　TibaMe [UTF-8?]5æœˆæ‡¶äººåŒ…ã€‘ç†±é–€æ–°èª²èˆ‡èˆ·å ´å...</a></div></td><td class="text-right">39KB</td><td><input type="checkbox" aria-label="Select message 5"></td></tr>
          <tr class="h-[22px] bg-[#ffcccc]"><td><div class="row gap-1">6 <svg class="h-3 w-[13px]"><use href="#mail"/></svg></div></td><td>05/15/2020 01:16:44 am</td><td><div class="row"><svg class="pin"><use href="#pin"/></svg></div></td></tr>
        </tbody>
      </table>
    </div>

    <div role="tooltip" class="absolute top-[85px] left-[535px] border border-white bg-[#2e2e2e] px-[7px] font-['Open_Sans',sans-serif] text-[15px] leading-[23px] text-white shadow-lg">WebDisk</div>
    <div role="status" class="absolute bottom-0 left-0 h-[23px] rounded-tr bg-[#dee1e6] pr-1.5 pl-1 font-['Open_Sans',sans-serif] text-[15px] leading-[23px] whitespace-nowrap text-[#3c4043]">https://mail.cs.nccu.edu.tw/cgi-bin/openwebmail/openwebmail-webdisk.pl?sessionid=s10509*mail.cs.nccu.edu.tw-session-0.488577777127372&amp;folder=INBOX&amp;page=1&amp;longpage=0&amp;sort=date_rev&amp;msgdatetype=sentdate&amp;&amp;action=showdir</div>
  </main>
</div>
</div>
</body>
</html>
